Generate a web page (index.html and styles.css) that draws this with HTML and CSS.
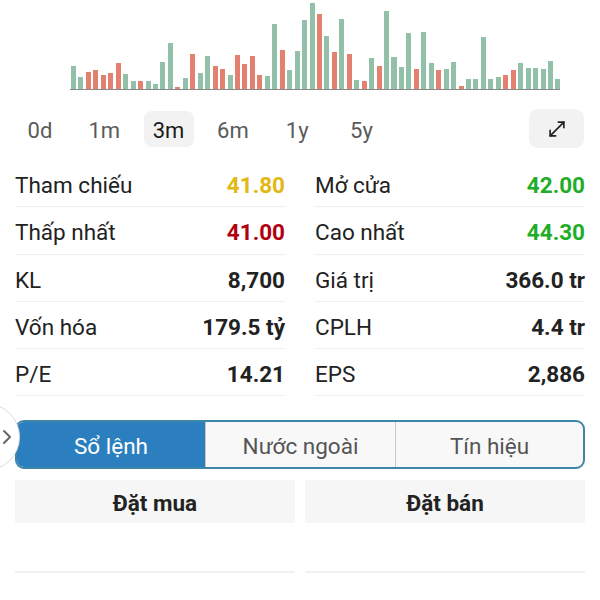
FILE: index.html
```html
<!DOCTYPE html>
<html lang="vi">
<head>
<meta charset="utf-8">
<link rel="stylesheet" href="styles.css">
</head>
<body>
<div class="chart">
  <div class="bars">
    <i class="g" style="height:23px"></i><i class="g" style="height:12px"></i><i class="r" style="height:17px"></i><i class="r" style="height:19px"></i><i class="r" style="height:14px"></i><i class="r" style="height:16px"></i><i class="r" style="height:26px"></i><i class="g" style="height:15px"></i><i class="g" style="height:8px"></i><i class="r" style="height:8px"></i><i class="g" style="height:8px"></i><i class="g" style="height:5px"></i><i class="g" style="height:27px"></i><i class="g" style="height:46px"></i><i class="r" style="height:2px"></i><i class="g" style="height:11px"></i><i class="r" style="height:35px"></i><i class="g" style="height:16px"></i><i class="g" style="height:33px"></i><i class="r" style="height:23px"></i><i class="r" style="height:20px"></i><i class="g" style="height:14px"></i><i class="r" style="height:34px"></i><i class="r" style="height:25px"></i><i class="r" style="height:33px"></i><i class="r" style="height:14px"></i><i class="g" style="height:13px"></i><i class="g" style="height:65px"></i><i class="r" style="height:39px"></i><i class="g" style="height:19px"></i><i class="g" style="height:38px"></i><i class="g" style="height:69px"></i><i class="g" style="height:86px"></i><i class="r" style="height:75px"></i><i class="g" style="height:53px"></i><i class="r" style="height:37px"></i><i class="g" style="height:70px"></i><i class="r" style="height:35px"></i><i class="g" style="height:9px"></i><i class="r" style="height:8px"></i><i class="g" style="height:31px"></i><i class="r" style="height:23px"></i><i class="g" style="height:78px"></i><i class="g" style="height:32px"></i><i class="g" style="height:22px"></i><i class="g" style="height:56px"></i><i class="r" style="height:20px"></i><i class="g" style="height:57px"></i><i class="g" style="height:26px"></i><i class="r" style="height:19px"></i><i class="g" style="height:20px"></i><i class="g" style="height:27px"></i><i class="r" style="height:3px"></i><i class="g" style="height:10px"></i><i class="g" style="height:10px"></i><i class="g" style="height:52px"></i><i class="g" style="height:10px"></i><i class="g" style="height:12px"></i><i class="r" style="height:14px"></i><i class="r" style="height:19px"></i><i class="g" style="height:26px"></i><i class="g" style="height:21px"></i><i class="g" style="height:21px"></i><i class="g" style="height:20px"></i><i class="g" style="height:28px"></i><i class="g" style="height:10px"></i>
  </div>
</div>

<div class="ranges">
  <div class="pills">
    <span class="pill">0d</span>
    <span class="pill">1m</span>
    <span class="pill active">3m</span>
    <span class="pill">6m</span>
    <span class="pill">1y</span>
    <span class="pill">5y</span>
  </div>
  <div class="expand">
    <svg width="22" height="22" viewBox="0 0 24 24" fill="none" stroke="#222" stroke-width="1.8" stroke-linecap="round" stroke-linejoin="round">
      <path d="M4.5 19.5 L19.5 4.5"/>
      <path d="M13.5 4.5 H19.5 V10.5"/>
      <path d="M4.5 13.5 V19.5 H10.5"/>
    </svg>
  </div>
</div>

<div class="stats">
  <div class="col">
    <div class="row"><span class="lbl">Tham chiếu</span><span class="val ref">41.80</span></div>
    <div class="row"><span class="lbl">Thấp nhất</span><span class="val down">41.00</span></div>
    <div class="row"><span class="lbl">KL</span><span class="val">8,700</span></div>
    <div class="row"><span class="lbl">Vốn hóa</span><span class="val">179.5 tỷ</span></div>
    <div class="row"><span class="lbl">P/E</span><span class="val">14.21</span></div>
  </div>
  <div class="col">
    <div class="row"><span class="lbl">Mở cửa</span><span class="val up">42.00</span></div>
    <div class="row"><span class="lbl">Cao nhất</span><span class="val up">44.30</span></div>
    <div class="row"><span class="lbl">Giá trị</span><span class="val">366.0 tr</span></div>
    <div class="row"><span class="lbl">CPLH</span><span class="val">4.4 tr</span></div>
    <div class="row"><span class="lbl">EPS</span><span class="val">2,886</span></div>
  </div>
</div>

<div class="tabwrap">
  <div class="tabs">
    <div class="tab active">Sổ lệnh</div>
    <div class="tab">Nước ngoài</div>
    <div class="tab">Tín hiệu</div>
  </div>
  <div class="side">
    <svg width="10" height="16" viewBox="0 0 10 16" fill="none" stroke="#666" stroke-width="2" stroke-linecap="round" stroke-linejoin="round"><path d="M2 2 L8 8 L2 14"/></svg>
  </div>
</div>

<div class="book">
  <div class="bcol">
    <div class="bhead">Đặt mua</div>
    <div class="bbody"></div>
  </div>
  <div class="bcol">
    <div class="bhead">Đặt bán</div>
    <div class="bbody"></div>
  </div>
</div>
</body>
</html>
```

FILE: styles.css
```css
* { box-sizing: border-box; }
html, body { margin: 0; padding: 0; background: #fff; }
body {
  width: 600px;
  height: 600px;
  overflow: hidden;
  font-family: Roboto, "Noto Sans", "Liberation Sans", sans-serif;
  color: #222;
}

.chart {
  height: 90px;
  padding-left: 70px;
}
.bars {
  width: 490px;
  height: 90px;
  display: flex;
  align-items: flex-end;
  gap: 2.44px;
  padding-left: 1px;
  border-bottom: 1px solid #8a8a8a;
}
.bars i {
  display: block;
  flex: 1;
}
.bars .g { background: #93c0a9; }
.bars .r { background: #e4806f; }

.ranges {
  margin-top: 19px;
  height: 39px;
  display: flex;
  align-items: center;
  justify-content: space-between;
  padding: 0 16px 0 15px;
}
.pills {
  display: flex;
  gap: 14.3px;
}
.pill {
  width: 50px;
  height: 36px;
  display: flex;
  align-items: center;
  justify-content: center;
  padding-top: 3px;
  font-size: 22px;
  color: #5a5a5a;
  border-radius: 8px;
}
.pill.active {
  background: #f2f2f2;
  color: #1a1a1a;
}
.expand {
  width: 55px;
  height: 39px;
  border-radius: 9px;
  background: #f2f2f2;
  display: flex;
  align-items: center;
  justify-content: center;
}

.stats {
  margin-top: 12px;
  display: flex;
  gap: 30px;
  padding: 0 15px;
}
.col { flex: 1; }
.row {
  height: 47.3px;
  display: flex;
  align-items: center;
  justify-content: space-between;
  border-bottom: 1px solid #eeeeee;
  font-size: 22.5px;
  padding-top: 4px;
}
.lbl { color: #222; }
.val { font-weight: 700; color: #222; }
.val.ref { color: #e2b814; }
.val.down { color: #b1000f; }
.val.up { color: #1fad2a; }

.tabwrap {
  position: relative;
  margin-top: 24px;
  padding: 0 15px;
}
.tabs {
  display: flex;
  height: 49px;
  border: 2px solid #3d86a8;
  border-radius: 9px;
  overflow: hidden;
  background: #f8f8f8;
}
.tab {
  display: flex;
  align-items: center;
  justify-content: center;
  padding-top: 3px;
  font-size: 22.5px;
  color: #555;
  border-left: 1px solid #c8c8c8;
}
.tab:nth-child(1) { width: 188px; border-left: none; }
.tab:nth-child(2) { width: 190px; }
.tab:nth-child(3) { flex: 1; }
.tab.active {
  background: #2b7fbf;
  color: #fff;
}
.side {
  position: absolute;
  left: -48px;
  top: -17px;
  width: 68px;
  height: 68px;
  border-radius: 50%;
  border: 1px solid #dcdcdc;
  background: #fff;
  display: flex;
  align-items: center;
  justify-content: flex-end;
  padding-right: 7px;
}

.book {
  margin-top: 11px;
  display: flex;
  gap: 10px;
  padding: 0 15px;
}
.bcol { flex: 1; }
.bhead {
  height: 43px;
  background: #f6f6f6;
  display: flex;
  align-items: center;
  justify-content: center;
  padding-top: 3px;
  font-size: 22.5px;
  font-weight: 700;
  color: #222;
}
.bbody {
  height: 50px;
  border-bottom: 2px solid #f0f0f0;
}
```
